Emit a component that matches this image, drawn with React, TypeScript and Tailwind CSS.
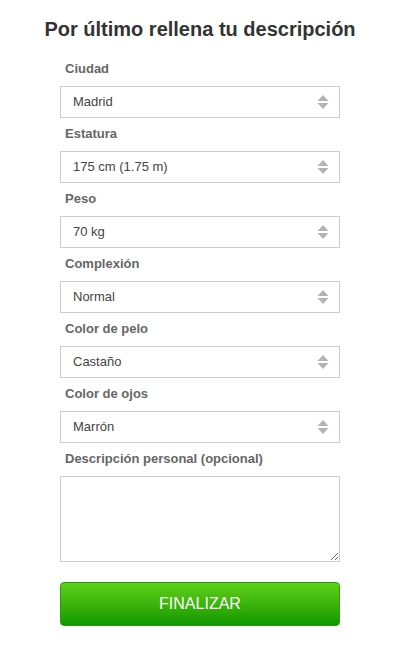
import React from "react";

const fields: [string, string][] = [
  ["Ciudad", "Madrid"],
  ["Estatura", "175 cm (1.75 m)"],
  ["Peso", "70 kg"],
  ["Complexión", "Normal"],
  ["Color de pelo", "Castaño"],
  ["Color de ojos", "Marrón"],
];

function Arrows() {
  return (
    <svg width="12" height="16" viewBox="0 0 12 16" className="block">
      <path d="M6 1 L11.5 7 L0.5 7 Z" fill="#b3b3b3" />
      <path d="M6 15 L11.5 9 L0.5 9 Z" fill="#b3b3b3" />
    </svg>
  );
}

export default function App() {
  return (
    <div
      className="w-[400px] h-[646px] bg-white"
      style={{ fontFamily: '"Liberation Sans", Arial, sans-serif' }}
    >
      <h1 className="pt-[17px] text-center text-[20px] leading-[24px] font-bold text-[#333333]">
        Por último rellena tu descripción
      </h1>
      <div className="mx-[60px] w-[280px] pt-[18px]">
        {fields.map(([label, value], i) => (
          <div key={label} className={i === 0 ? "" : "mt-[6px]"}>
            <div className="pl-[5px] text-[13px] leading-[20px] font-bold text-[#666666]">
              {label}
            </div>
            <div className="mt-[7px] h-[32px] border border-[#cccccc] bg-white flex items-center justify-between pl-[12px] pr-[10px]">
              <span className="text-[13px] text-[#444444]">{value}</span>
              <Arrows />
            </div>
          </div>
        ))}
        <div className="mt-[6px]">
          <div className="pl-[5px] text-[13px] leading-[20px] font-bold text-[#666666]">
            Descripción personal (opcional)
          </div>
          <textarea className="mt-[7px] block w-[280px] h-[86px] border border-[#cccccc] bg-white outline-none" />
        </div>
        <button className="mt-[20px] block w-[280px] h-[44px] rounded-[4px] border border-[#2a9e0a] bg-gradient-to-b from-[#5dd118] to-[#089800] text-white text-[16px] leading-[42px] text-center">
          FINALIZAR
        </button>
      </div>
    </div>
  );
}
